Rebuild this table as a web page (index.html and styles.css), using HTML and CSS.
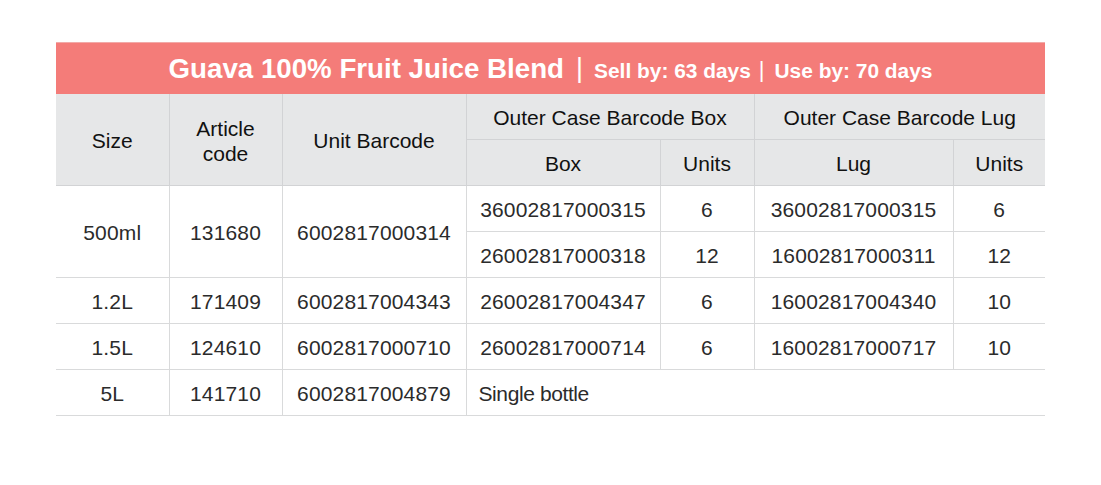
FILE: index.html
```html
<!DOCTYPE html>
<html>
<head>
<meta charset="utf-8">
<link rel="stylesheet" href="styles.css">
</head>
<body>
<div class="page">
<table class="spec">
  <colgroup>
    <col class="c1"><col class="c2"><col class="c3"><col class="c4"><col class="c5"><col class="c6"><col class="c7">
  </colgroup>
  <thead>
    <tr>
      <th colspan="7" class="title"><span class="main">Guava 100% Fruit Juice Blend</span><span class="bar">|</span><span class="sub">Sell by: 63 days</span><span class="bar small">|</span><span class="sub">Use by: 70 days</span></th>
    </tr>
    <tr class="h1">
      <th rowspan="2">Size</th>
      <th rowspan="2" class="two">Article<br>code</th>
      <th rowspan="2">Unit Barcode</th>
      <th colspan="2">Outer Case Barcode Box</th>
      <th colspan="2">Outer Case Barcode Lug</th>
    </tr>
    <tr class="h2">
      <th>Box</th>
      <th>Units</th>
      <th>Lug</th>
      <th>Units</th>
    </tr>
  </thead>
  <tbody>
    <tr>
      <td rowspan="2">500ml</td>
      <td rowspan="2">131680</td>
      <td rowspan="2">6002817000314</td>
      <td>36002817000315</td>
      <td>6</td>
      <td>36002817000315</td>
      <td>6</td>
    </tr>
    <tr>
      <td>26002817000318</td>
      <td>12</td>
      <td>16002817000311</td>
      <td>12</td>
    </tr>
    <tr>
      <td>1.2L</td>
      <td>171409</td>
      <td>6002817004343</td>
      <td>26002817004347</td>
      <td>6</td>
      <td>16002817004340</td>
      <td>10</td>
    </tr>
    <tr>
      <td>1.5L</td>
      <td>124610</td>
      <td>6002817000710</td>
      <td>26002817000714</td>
      <td>6</td>
      <td>16002817000717</td>
      <td>10</td>
    </tr>
    <tr class="last">
      <td>5L</td>
      <td>141710</td>
      <td>6002817004879</td>
      <td colspan="4" class="single">Single bottle</td>
    </tr>
  </tbody>
</table>
</div>
</body>
</html>
```
FILE: styles.css
```css
html, body {
  margin: 0;
  padding: 0;
  background: #ffffff;
}
.page {
  padding: 42px 0 0 56px;
}
.spec {
  border-collapse: collapse;
  table-layout: fixed;
  width: 989px;
  font-family: "Liberation Sans", Arial, sans-serif;
}
.c1 { width: 113px; }
.c2 { width: 113px; }
.c3 { width: 184px; }
.c4 { width: 194px; }
.c5 { width: 94px; }
.c6 { width: 199px; }
.c7 { width: 92px; }

.title {
  background: #f47c79;
  color: #ffffff;
  height: 51px;
  padding: 0;
  font-weight: bold;
  text-align: center;
  white-space: nowrap;
  border-top: 1px solid #f2aaa8;
}
.title .main {
  font-size: 27.7px;
}
.title .bar {
  font-size: 27px;
  font-weight: normal;
  margin: 0 11px 0 12px;
  position: relative;
  top: -1px;
}
.title .bar.small {
  font-size: 22px;
  margin: 0 10px 0 8px;
}
.title .sub {
  font-size: 20.9px;
}

.h1 th, .h2 th {
  background: #e6e7e8;
  color: #111111;
  font-weight: normal;
  font-size: 21px;
  padding: 2px 0 0 0;
  text-align: center;
  border: 1px solid #d2d3d5;
  border-top: none;
}
.h1 th { height: 43px; }
.h2 th { height: 43px; }
.h1 th.two { line-height: 25px; }
.h1 th:first-child { border-left: none; }
.h1 th:last-child, .h2 th:last-child { border-right: none; }

tbody td {
  color: #2b2b2b;
  font-size: 21px;
  letter-spacing: 0.15px;
  text-align: center;
  height: 43px;
  padding: 2px 0 0 0;
  border: 1px solid #d9dadb;
}
tbody tr td:first-child { border-left: none; }
tbody tr td:last-child { border-right: none; }
tbody tr:nth-child(2) td:first-child { border-left: 1px solid #d9dadb; }
.single {
  text-align: left;
  padding-left: 12px;
  letter-spacing: -0.4px;
}
.last td { border-right: none; }
.last td:not(:first-child) { border-left: 1px solid #d9dadb; }
```
